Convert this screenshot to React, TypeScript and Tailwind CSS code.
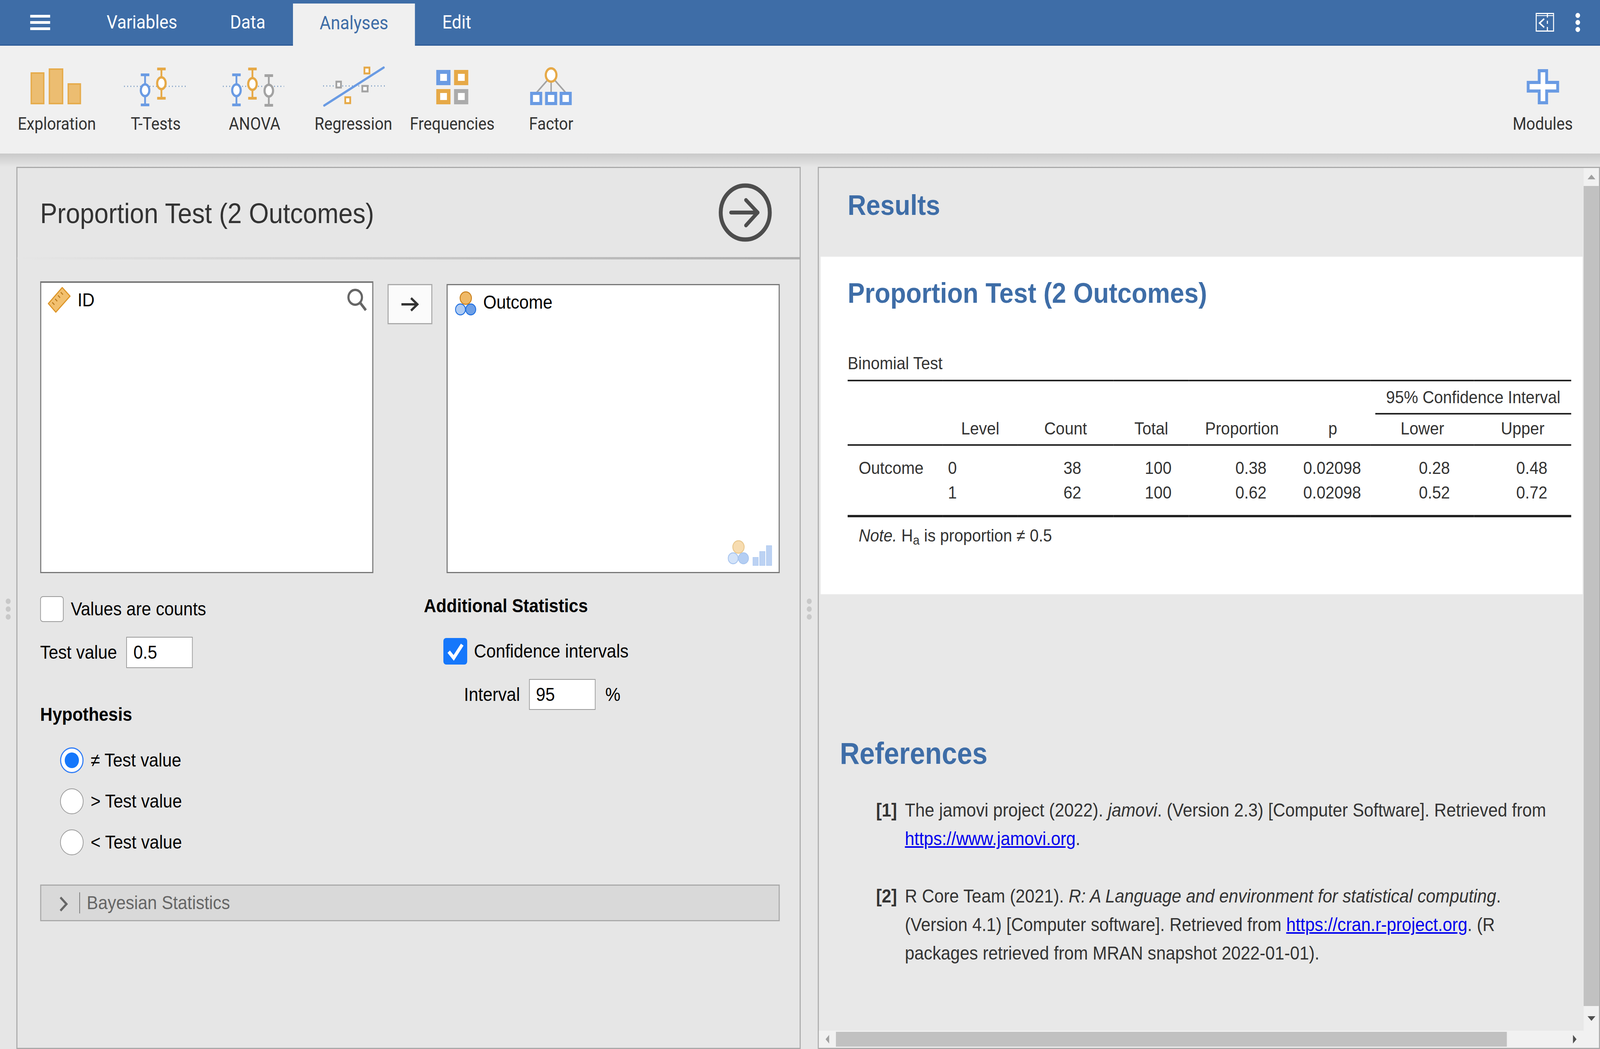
import React, { useState } from "react";

const BLUE = "#6a9be3";
const ORANGE = "#e6a947";
const GRAY = "#a3a3a3";

function Lolly({ x, top, bottom, oy, c }: { x: number; top: number; bottom: number; oy: number; c: string }) {
  return (
    <g>
      <line x1={x} x2={x} y1={top} y2={bottom} stroke={c} strokeWidth="5" />
      <rect x={x - 12} y={top - 3} width="24" height="7" fill={c} />
      <rect x={x - 12} y={bottom - 4} width="24" height="7" fill={c} />
      <ellipse cx={x} cy={oy} rx="12" ry="15" fill="#fff" stroke={c} strokeWidth="6" />
    </g>
  );
}

function Dotted({ x1, x2, y }: { x1: number; x2: number; y: number }) {
  return <line x1={x1} x2={x2} y1={y} y2={y} stroke="#5c86b8" strokeWidth="3" strokeDasharray="2 7" />;
}

function Sq({ x, y, w, h, c }: { x: number; y: number; w: number; h: number; c: string }) {
  return <rect x={x} y={y} width={w} height={h} fill="#fff" stroke={c} strokeWidth="5" />;
}

function IconExploration() {
  return (
    <g fill="#ecbd71" stroke="#e6ac4d" strokeWidth="4">
      <rect x="67" y="22" width="35" height="78" />
      <rect x="118" y="12" width="37" height="88" />
      <rect x="171" y="50" width="34" height="50" />
    </g>
  );
}
function IconTTests() {
  return (
    <g>
      <Dotted x1={50} x2={224} y={56} />
      <Lolly x={109} top={26} bottom={104} oy={66} c={BLUE} />
      <Lolly x={155} top={11} bottom={87} oy={48} c={ORANGE} />
    </g>
  );
}
function IconAnova() {
  return (
    <g>
      <Dotted x1={50} x2={222} y={56} />
      <Lolly x={88} top={26} bottom={104} oy={66} c={BLUE} />
      <Lolly x={133} top={11} bottom={87} oy={50} c={ORANGE} />
      <Lolly x={179} top={28} bottom={105} oy={67} c={GRAY} />
    </g>
  );
}
function IconRegression() {
  return (
    <g>
      <Dotted x1={54} x2={227} y={55} />
      <line x1="57" y1="105" x2="224" y2="8" stroke={BLUE} strokeWidth="6" strokeLinecap="round" />
      <Sq x={170} y={8} w={14} h={15} c={ORANGE} />
      <Sq x={91} y={44} w={13} h={15} c={GRAY} />
      <Sq x={164} y={55} w={15} h={14} c={GRAY} />
      <Sq x={116} y={84} w={14} h={15} c={ORANGE} />
    </g>
  );
}
function IconFrequencies() {
  const b = (x: number, y: number, c: string) => (
    <g key={x + "-" + y}>
      <rect x={x} y={y} width="40" height="39" fill={c} />
      <rect x={x + 11} y={y + 10} width="19" height="18" fill="#fff" />
    </g>
  );
  return (
    <g>
      {b(94, 14, BLUE)}
      {b(144, 14, ORANGE)}
      {b(94, 63, ORANGE)}
      {b(144, 63, "#ababab")}
    </g>
  );
}
function IconFactor() {
  const b = (x: number) => (
    <g key={x}>
      <rect x={x} y="70" width="34" height="34" fill={BLUE} />
      <rect x={x + 8} y="78" width="18" height="18" fill="#fff" />
    </g>
  );
  return (
    <g>
      <g stroke="#a3a3a3" strokeWidth="4">
        <line x1="129" y1="40" x2="98" y2="72" />
        <line x1="139" y1="40" x2="139" y2="72" />
        <line x1="149" y1="40" x2="180" y2="72" />
      </g>
      <ellipse cx="139" cy="27" rx="15" ry="17" fill="#fff" stroke={ORANGE} strokeWidth="6" />
      {b(80)}
      {b(122)}
      {b(163)}
    </g>
  );
}

function ToolButton({ label, children }: { label: string; children: React.ReactNode }) {
  return (
    <div className="w-[278px] flex flex-col items-center">
      <svg viewBox="0 0 278 120" className="w-[278px] h-[120px] block">
        {children}
      </svg>
      <div className="mt-[8px] h-[48px] leading-[48px] text-[44px] text-[#333] [font-family:Roboto,sans-serif]">{label}</div>
    </div>
  );
}

function Radio({ on, label }: { on?: boolean; label: string }) {
  return (
    <div className="flex items-center h-[66px]">
      {on ? (
        <div className="w-[66px] h-[66px] rounded-full bg-white border-[3px] border-[#2f7cf6] flex items-center justify-center">
          <div className="w-[40px] h-[40px] rounded-full bg-[#1577fb]" />
        </div>
      ) : (
        <div className="w-[66px] h-[66px] rounded-full bg-white border-[2px] border-[#999]" />
      )}
      <span className="ml-[20px]">{label}</span>
    </div>
  );
}

function Th({ children }: { children?: React.ReactNode }) {
  return <th className="font-normal text-center h-[78px] pb-[4px] align-middle">{children}</th>;
}

export default function App() {
  // The design is 4500px wide, but the window measured innerWidth 4096 when this was built
  // (the brief says 4500). Squeeze the design horizontally to the real width; at 4500 this is identity.
  const [fit] = useState(() => window.innerWidth / 4500);
  const rows = [
    { o: "Outcome", l: "0", c: "38", p: "0.38", low: "0.28", up: "0.48", pad: "pt-[30px] pb-[4px]" },
    { o: "", l: "1", c: "62", p: "0.62", low: "0.52", up: "0.72", pad: "pt-[5px] pb-[30px]" },
  ];
  return (
    <div className="w-screen h-screen overflow-hidden">
      <div
        className="w-[4500px] h-[2685px] origin-top-left overflow-hidden flex flex-col bg-[#e6e6e6] text-[48px] text-black [font-family:'Liberation_Sans',Arial,sans-serif]"
        style={{ transform: `scaleX(${fit})` }}
      >
        {/* Tab bar */}
        <header className="h-[117px] shrink-0 bg-[#3e6da7] border-b-[3px] border-[#2f5c98] flex text-white text-[48px] [font-family:Roboto,sans-serif]">
          <div className="w-[226px] pl-[85px] flex flex-col justify-center gap-[9px]">
            <div className="w-[56px] h-[7px] bg-white" />
            <div className="w-[56px] h-[7px] bg-white" />
            <div className="w-[56px] h-[7px] bg-white" />
          </div>
          <div className="flex items-center w-[347px] pl-[74px]">Variables</div>
          <div className="flex items-center w-[251px] pl-[74px]">Data</div>
          <div className="flex items-center justify-center w-[343px] mt-[9px] mb-[-3px] bg-[#f0f0f0] text-[#3e6da7] pb-[9px]">Analyses</div>
          <div className="flex items-center pl-[77px]">Edit</div>
          <div className="ml-auto flex items-center pr-[56px]">
            <svg viewBox="0 0 52 48" className="w-[52px] h-[48px]" fill="none" stroke="#fff">
              <rect x="1.5" y="1.5" width="49" height="45" strokeWidth="3" />
              <line x1="2" y1="7" x2="50" y2="7" strokeWidth="2" />
              <polyline points="24,15 11,26 24,37" strokeWidth="4" />
              <line x1="33" y1="2" x2="33" y2="46" strokeWidth="3" strokeDasharray="10 8 8 8 20" />
            </svg>
            <div className="ml-[60px] flex flex-col gap-[5px]">
              <div className="w-[13px] h-[13px] rounded-full bg-white" />
              <div className="w-[13px] h-[13px] rounded-full bg-white" />
              <div className="w-[13px] h-[13px] rounded-full bg-white" />
            </div>
          </div>
        </header>

        {/* Ribbon */}
        <div className="h-[276px] shrink-0 bg-[#f0f0f0] flex pl-[21px] pt-[48px]">
          <ToolButton label="Exploration"><IconExploration /></ToolButton>
          <ToolButton label="T-Tests"><IconTTests /></ToolButton>
          <ToolButton label="ANOVA"><IconAnova /></ToolButton>
          <ToolButton label="Regression"><IconRegression /></ToolButton>
          <ToolButton label="Frequencies"><IconFrequencies /></ToolButton>
          <ToolButton label="Factor"><IconFactor /></ToolButton>
          <div className="ml-auto w-[322px] flex flex-col items-center">
            <svg viewBox="0 0 278 120" className="w-[278px] h-[120px] block">
              <path
                d="M 129 16 H 150 V 46 H 181 V 68 H 150 V 98 H 129 V 68 H 98 V 46 H 129 Z"
                fill="#fff"
                stroke={BLUE}
                strokeWidth="8"
              />
            </svg>
            <div className="mt-[8px] h-[48px] leading-[48px] text-[44px] text-[#333] [font-family:Roboto,sans-serif]">Modules</div>
          </div>
        </div>

        {/* Main area */}
        <main className="flex-1 min-h-0 flex pt-[34px] bg-linear-to-b from-[#c9c9c9] from-0% to-[#e6e6e6] to-[1.5%]">
          <div className="w-[46px] shrink-0 flex flex-col items-center pt-[1105px] gap-[6px]">
            <div className="w-[14px] h-[14px] rounded-full bg-[#c8c8c8]" />
            <div className="w-[14px] h-[14px] rounded-full bg-[#c8c8c8]" />
            <div className="w-[14px] h-[14px] rounded-full bg-[#c8c8c8]" />
          </div>

          {/* Options panel */}
          <section className="w-[2206px] shrink-0 bg-[#e6e6e6] border-[3px] border-[#aaa] flex flex-col">
            <div className="h-[228px] flex items-center justify-between pl-[64px] pr-[78px] shrink-0 text-[#333]">
              <h1 className="text-[72px] font-normal pt-[4px]">Proportion Test (2 Outcomes)</h1>
              <svg viewBox="0 0 150 150" className="w-[150px] h-[150px]" fill="none" stroke="#4d4d4d" strokeLinecap="round" strokeLinejoin="round">
                <circle cx="75" cy="75" r="69" strokeWidth="11" />
                <line x1="35" y1="75" x2="110" y2="75" strokeWidth="10" />
                <polyline points="77,43 110,75 77,108" strokeWidth="10" />
              </svg>
            </div>
            <div className="h-[6px] shrink-0 bg-linear-to-r from-[#e6e6e6] to-[#aeaeae]" />

            <div className="pl-[64px] pt-[56px] flex items-start">
              <div className="relative shrink-0 w-[937px] h-[747px] bg-white border-[3px] border-[#777] border-t-[4px]">
                <div className="flex items-start">
                  <svg viewBox="0 0 66 68" className="w-[66px] h-[68px] ml-[18px] mt-[10px]">
                    <path d="M 41 2 L 63 24 L 23 65 L 2 43 Z" fill="#f2c06f" stroke="#dd9527" strokeWidth="3" strokeLinejoin="round" />
                    <path d="M 37 14 L 43 20 M 29 22 L 35 28 M 21 31 L 27 37 M 13 40 L 19 46" stroke="#b8791c" strokeWidth="2.5" />
                  </svg>
                  <span className="ml-[18px] mt-[16px] leading-[56px]">ID</span>
                </div>
                <svg viewBox="0 0 60 60" className="absolute right-[13px] top-[14px] w-[60px] h-[60px]" fill="none" stroke="#666" strokeWidth="6">
                  <circle cx="25" cy="23" r="19" />
                  <line x1="39" y1="37" x2="55" y2="56" strokeWidth="7" />
                </svg>
              </div>

              <div className="ml-[40px] mt-[7px] shrink-0 w-[126px] h-[103px] bg-[#fbfbfb] border-[3px] border-[#aaa] flex items-center justify-center">
                <svg viewBox="0 0 50 36" className="w-[50px] h-[36px]" fill="none" stroke="#333" strokeWidth="6">
                  <line x1="1" y1="18" x2="46" y2="18" />
                  <polyline points="28,2 46,18 28,34" />
                </svg>
              </div>

              <div className="relative ml-[40px] mt-[7px] shrink-0 w-[937px] h-[740px] bg-white border-[3px] border-[#777]">
                <div className="flex items-start">
                  <svg viewBox="0 0 62 66" className="w-[62px] h-[66px] ml-[21px] mt-[15px]">
                    <circle cx="15" cy="47" r="14" fill="#aecbf3" stroke="#1f6fe0" strokeWidth="2.5" />
                    <circle cx="44" cy="47" r="14" fill="#6d9fe6" stroke="#1f6fe0" strokeWidth="2.5" />
                    <circle cx="30" cy="18" r="16" fill="#efb968" stroke="#c9801d" strokeWidth="2.5" />
                  </svg>
                  <span className="ml-[17px] mt-[16px] leading-[56px]">Outcome</span>
                </div>
                <div className="absolute right-[19px] bottom-[16px] flex items-end gap-[8px]">
                  <svg viewBox="0 0 62 66" className="w-[62px] h-[66px]">
                    <circle cx="15" cy="47" r="14" fill="#d3e3f9" stroke="#a9c6ef" strokeWidth="2.5" />
                    <circle cx="44" cy="47" r="14" fill="#b4cef3" stroke="#a9c6ef" strokeWidth="2.5" />
                    <circle cx="30" cy="18" r="16" fill="#f7dcb0" stroke="#e9c88f" strokeWidth="2.5" />
                  </svg>
                  <div className="flex items-end gap-[3px] h-[52px]">
                    <div className="w-[16px] h-[22px] bg-[#bcd2f3] border border-[#a9c6ef]" />
                    <div className="w-[16px] h-[37px] bg-[#bcd2f3] border border-[#a9c6ef]" />
                    <div className="w-[16px] h-[52px] bg-[#bcd2f3] border border-[#a9c6ef]" />
                  </div>
                </div>
              </div>
            </div>

            <div className="pl-[64px] pt-[54px] flex items-start">
              <div className="w-[1079px] pt-[5px]">
                <div className="flex items-center h-[66px]">
                  <div className="w-[66px] h-[66px] rounded-[8px] bg-white border-[2px] border-[#999]" />
                  <span className="ml-[20px]">Values are counts</span>
                </div>
                <div className="mt-[38px] h-[80px] flex items-center">
                  <span>Test value</span>
                  <div className="ml-[26px] w-[187px] h-[80px] bg-white border-[2px] border-[#999] pl-[18px] flex items-center">0.5</div>
                </div>
                <div className="mt-[89px] h-[60px] flex items-center font-bold">Hypothesis</div>
                <div className="mt-[54px] pl-[56px] flex flex-col gap-[39px]">
                  <Radio on label="≠ Test value" />
                  <Radio label="> Test value" />
                  <Radio label="< Test value" />
                </div>
              </div>
              <div>
                <div className="h-[60px] flex items-center font-bold">Additional Statistics</div>
                <div className="mt-[52px] ml-[55px] h-[68px] flex items-center">
                  <div className="w-[67px] h-[68px] rounded-[8px] bg-[#1577fb] flex items-center justify-center">
                    <svg viewBox="0 0 50 50" className="w-[50px] h-[50px]" fill="none" stroke="#fff" strokeWidth="9">
                      <polyline points="6,26 20,42 44,8" />
                    </svg>
                  </div>
                  <span className="ml-[19px]">Confidence intervals</span>
                </div>
                <div className="mt-[37px] ml-[113px] h-[79px] flex items-center">
                  <span>Interval</span>
                  <div className="ml-[26px] w-[187px] h-[79px] bg-white border-[2px] border-[#999] pl-[17px] flex items-center">95</div>
                  <span className="ml-[27px]">%</span>
                </div>
              </div>
            </div>

            <div className="ml-[64px] mt-[75px] w-[2080px] h-[94px] bg-[#d9d9d9] border-[3px] border-[#aaa] flex items-center text-[#666]">
              <svg viewBox="0 0 24 40" className="w-[24px] h-[40px] ml-[51px] mt-[6px]" fill="none" stroke="#666" strokeWidth="6">
                <polyline points="3,3 20,20 3,37" />
              </svg>
              <div className="ml-[32px] w-[2px] h-[54px] bg-[#777]" />
              <span className="ml-[19px]">Bayesian Statistics</span>
            </div>
          </section>

          <div className="w-[48px] shrink-0 flex flex-col items-center pt-[1105px] gap-[6px]">
            <div className="w-[14px] h-[14px] rounded-full bg-[#c8c8c8]" />
            <div className="w-[14px] h-[14px] rounded-full bg-[#c8c8c8]" />
            <div className="w-[14px] h-[14px] rounded-full bg-[#c8c8c8]" />
          </div>

          {/* Results panel */}
          <section className="flex-1 min-w-0 flex flex-col bg-[#e8e8e8] border-[3px] border-[#aaa]">
            <div className="flex-1 min-h-0 flex">
              <div className="flex-1 min-w-0 flex flex-col">
                <div className="h-[227px] shrink-0 pl-[81px] pt-[53px]">
                  <h2 className="text-[72px] leading-[84px] font-bold text-[#3e6da7]">Results</h2>
                </div>

                <div className="ml-[5px] mr-[3px] h-[864px] shrink-0 bg-white pl-[76px] text-[#333]">
                  <h2 className="pt-[50px] text-[72px] leading-[86px] font-bold text-[#3e6da7]">Proportion Test (2 Outcomes)</h2>
                  <div className="mt-[107px] h-[72px] text-[45px] leading-[60px]">Binomial Test</div>
                  <table className="table-fixed border-collapse w-[2035px] text-[45px] leading-[54px]">
                    <colgroup>
                      <col className="w-[268px]" />
                      <col className="w-[210px]" />
                      <col className="w-[270px]" />
                      <col className="w-[212px]" />
                      <col className="w-[298px]" />
                      <col className="w-[213px]" />
                      <col className="w-[291px]" />
                      <col className="w-[273px]" />
                    </colgroup>
                    <thead>
                      <tr className="border-t-[4px] border-[#222]">
                        <th colSpan={6} className="h-[85px]" />
                        <th colSpan={2} className="font-normal align-top h-[85px]">
                          <div className="ml-[13px] h-[85px] flex items-center justify-center border-b-[4px] border-[#222]">95% Confidence Interval</div>
                        </th>
                      </tr>
                      <tr className="border-b-[4px] border-[#222]">
                        <Th />
                        <Th>Level</Th>
                        <Th>Count</Th>
                        <Th>Total</Th>
                        <Th>Proportion</Th>
                        <Th>p</Th>
                        <Th>Lower</Th>
                        <Th>Upper</Th>
                      </tr>
                    </thead>
                    <tbody>
                      {rows.map((r) => (
                        <tr key={r.l}>
                          <td className={"pl-[31px] " + r.pad}>{r.o}</td>
                          <td className={"pl-[14px] " + r.pad}>{r.l}</td>
                          <td className={"text-right pr-[91px] " + r.pad}>{r.c}</td>
                          <td className={"text-right pr-[49px] " + r.pad}>100</td>
                          <td className={"text-right pr-[80px] " + r.pad}>{r.p}</td>
                          <td className={"text-right pr-[27px] " + r.pad}>0.02098</td>
                          <td className={"text-right pr-[68px] " + r.pad}>{r.low}</td>
                          <td className={"text-right pr-[67px] " + r.pad}>{r.up}</td>
                        </tr>
                      ))}
                    </tbody>
                    <tfoot>
                      <tr className="border-t-[6px] border-[#222]">
                        <td colSpan={8} className="pl-[31px] pt-[20px]">
                          <em>Note.</em> H<sub>a</sub> is proportion ≠ 0.5
                        </td>
                      </tr>
                    </tfoot>
                  </table>
                </div>

                <div className="pl-[59px] pt-[362px] text-[#333]">
                  <h2 className="text-[77px] leading-[90px] font-bold text-[#3e6da7]">References</h2>
                  <ol className="mt-[64px] text-[48px] leading-[73px]">
                    <li className="flex">
                      <b className="w-[81px] ml-[102px] shrink-0">[1]</b>
                      <p className="w-[1825px]">
                        The jamovi project (2022). <em>jamovi</em>. (Version 2.3) [Computer Software]. Retrieved from{" "}
                        <a className="text-[#0000ee] underline" href="#">https://www.jamovi.org</a>.
                      </p>
                    </li>
                    <li className="flex mt-[74px]">
                      <b className="w-[81px] ml-[102px] shrink-0">[2]</b>
                      <p className="w-[1825px]">
                        R Core Team (2021). <em>R: A Language and environment for statistical computing</em>. (Version 4.1) [Computer software]. Retrieved from{" "}
                        <a className="text-[#0000ee] underline" href="#">https://cran.r-project.org</a>. (R packages retrieved from MRAN snapshot 2022-01-01).
                      </p>
                    </li>
                  </ol>
                </div>
              </div>

              {/* Vertical scrollbar */}
              <div className="w-[43px] shrink-0 bg-[#f1f1f1] flex flex-col">
                <div className="h-[46px] flex items-center justify-center">
                  <div className="w-0 h-0 border-l-[11px] border-r-[11px] border-b-[12px] border-l-transparent border-r-transparent border-b-[#a0a0a0]" />
                </div>
                <div className="flex-1 bg-[#c1c1c1]" />
                <div className="h-[63px] flex items-center justify-center">
                  <div className="w-0 h-0 border-l-[11px] border-r-[11px] border-t-[12px] border-l-transparent border-r-transparent border-t-[#505050]" />
                </div>
              </div>
            </div>

            {/* Horizontal scrollbar */}
            <div className="h-[44px] shrink-0 bg-[#f1f1f1] flex items-center">
              <div className="w-[48px] flex justify-center">
                <div className="w-0 h-0 border-t-[11px] border-b-[11px] border-r-[10px] border-t-transparent border-b-transparent border-r-[#a0a0a0]" />
              </div>
              <div className="w-[1887px] h-[38px] bg-[#c1c1c1]" />
              <div className="ml-[176px] w-[30px] flex justify-center">
                <div className="w-0 h-0 border-t-[11px] border-b-[11px] border-l-[10px] border-t-transparent border-b-transparent border-l-[#505050]" />
              </div>
            </div>
          </section>
        </main>
      </div>
    </div>
  );
}
